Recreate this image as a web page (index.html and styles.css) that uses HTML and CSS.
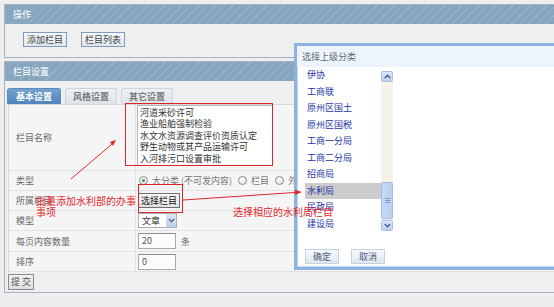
FILE: index.html
```html
<!DOCTYPE html>
<html lang="zh-CN">
<head>
<meta charset="utf-8">
<title>栏目设置</title>
<link rel="stylesheet" href="styles.css">
</head>
<body>
<div class="page">
  <div class="panel p1">
    <div class="phead">操作</div>
    <div class="actions">
      <button class="btn">添加栏目</button>
      <button class="btn">栏目列表</button>
    </div>
  </div>

  <div class="panel p2">
    <div class="phead">栏目设置</div>
    <div class="tabs">
      <span class="tab active">基本设置</span>
      <span class="tab">风格设置</span>
      <span class="tab">其它设置</span>
    </div>
    <div class="form">
      <div class="row r-name">
        <div class="lbl">栏目名称</div>
        <div class="val">
          <div class="ta">河道采砂许可<br>渔业船舶强制检验<br>水文水资源调查评价资质认定<br>野生动物或其产品运输许可<br>入河排污口设置审批</div>
        </div>
      </div>
      <div class="row">
        <div class="lbl">类型</div>
        <div class="val radios">
          <span class="radio checked"></span><span class="rtext">大分类 (不可发内容)</span>
          <span class="radio"></span><span class="rtext">栏目</span>
          <span class="radio"></span><span class="rtext">外部链接</span>
        </div>
      </div>
      <div class="row">
        <div class="lbl">所属栏目</div>
        <div class="val"><button class="btn-pick">选择栏目</button></div>
      </div>
      <div class="row">
        <div class="lbl">模型</div>
        <div class="val">
          <div class="select"><span class="sel-text">文章</span><span class="sel-arrow"><svg width="7" height="5" viewBox="0 0 7 5"><path d="M0.8 1 L3.5 3.8 L6.2 1" fill="none" stroke="#4a6797" stroke-width="1.3"/></svg></span></div>
        </div>
      </div>
      <div class="row r-tall">
        <div class="lbl">每页内容数量</div>
        <div class="val"><div class="input">20</div><span class="unit">条</span></div>
      </div>
      <div class="row">
        <div class="lbl">排序</div>
        <div class="val"><div class="input">0</div></div>
      </div>
    </div>
    <div class="submit-wrap"><button class="btn-submit">提交</button></div>
  </div>

  <div class="dialog">
    <div class="dlg-title">选择上级分类</div>
    <div class="dlg-body">
      <div class="list-wrap">
        <ul class="list">
          <li>伊协</li>
          <li>工商联</li>
          <li>原州区国土</li>
          <li>原州区国税</li>
          <li>工商一分局</li>
          <li>工商二分局</li>
          <li>招商局</li>
          <li class="sel">水利局</li>
          <li>民政局</li>
          <li>建设局</li>
        </ul>
        <div class="scrollbar">
          <span class="sb-btn"><svg width="7" height="5" viewBox="0 0 7 5"><path d="M0.8 4 L3.5 1.2 L6.2 4" fill="none" stroke="#3d5a8c" stroke-width="1.3"/></svg></span>
          <span class="sb-track"></span>
          <span class="sb-thumb"><span class="grip"></span></span>
          <span class="sb-btn"><svg width="7" height="5" viewBox="0 0 7 5"><path d="M0.8 1 L3.5 3.8 L6.2 1" fill="none" stroke="#3d5a8c" stroke-width="1.3"/></svg></span>
        </div>
      </div>
      <div class="dlg-actions">
        <button class="dbtn">确定</button>
        <button class="dbtn">取消</button>
      </div>
    </div>
  </div>

  <svg class="annot" width="554" height="307" viewBox="0 0 554 307">
    <rect x="125.5" y="103.5" width="147" height="62" fill="none" stroke="#d8262a" stroke-width="1"/>
    <rect x="138.5" y="184.5" width="44" height="28" fill="none" stroke="#d8262a" stroke-width="1"/>
    <line x1="71" y1="179" x2="112" y2="144" stroke="#e0282c" stroke-width="1"/>
    <polygon points="116,140 113.1,145.8 109.8,142" fill="#e0282c"/>
    <line x1="183" y1="200" x2="296" y2="192.4" stroke="#e0282c" stroke-width="1"/>
    <polygon points="302,192 295.2,195 294.8,189.8" fill="#e0282c"/>
  </svg>
  <div class="note n1">批量添加水利部的办事事项</div>
  <div class="note n2">选择相应的水利局栏目</div>
</div>
</body>
</html>
```
FILE: styles.css
```css
* { box-sizing: border-box; }
html, body {
  margin: 0;
  padding: 0;
}
body {
  width: 554px;
  height: 307px;
  overflow: hidden;
  background: #eeeeee;
  font-family: "Noto Sans CJK SC", "Noto Sans", sans-serif;
  font-size: 9px;
  color: #555;
}
button { font-family: inherit; cursor: default; }
.page {
  position: relative;
  width: 554px;
  height: 307px;
  overflow: hidden;
  padding: 4px 0 0 4px;
}
.panel {
  width: 550px;
  border: 1px solid #a4b4c4;
  border-right: none;
  background: #efefef;
  overflow: hidden;
}
.p2 { margin-top: 3px; }
.phead {
  height: 19px;
  line-height: 19px;
  padding-left: 8px;
  color: #fff;
  font-size: 9px;
  background: repeating-linear-gradient(135deg, #87a6be 0 5px, #98b4c9 5px 6px);
}
.actions {
  height: 33px;
  padding: 8px 0 0 18px;
  display: flex;
  gap: 14px;
  align-items: flex-start;
}
.btn {
  height: 15px;
  padding: 0 3px;
  font-size: 9px;
  line-height: 13px;
  color: #444;
  border: 1px solid #7f9bb8;
  background: linear-gradient(#f6f8fb, #dfe6ee);
}
.tabs {
  display: flex;
  gap: 4px;
  padding: 7px 0 0 2px;
  height: 23px;
}
.tab {
  width: 52px;
  height: 16px;
  line-height: 15px;
  text-align: center;
  font-weight: bold;
  color: #7a7a7a;
  border: 1px solid #cdd5dd;
  border-bottom: none;
  border-radius: 3px 3px 0 0;
  background: linear-gradient(#eef2f5, #dce3e9);
}
.tab.active {
  width: 54px;
  color: #fff;
  border-color: #5a8cbf;
  background: linear-gradient(#74a2d0, #4f84ba);
}
.form {
  margin-left: 3px;
  border-top: 1px solid #d8d8d8;
  border-left: 1px solid #d8d8d8;
  background: #f5f5f5;
}
.row {
  display: flex;
  height: 20px;
  border-bottom: 1px solid #e2e2e2;
}
.r-name { height: 66px; }
.r-tall { height: 21px; }
.lbl {
  width: 127px;
  flex: none;
  padding-left: 7px;
  border-right: 1px solid #e4e4e4;
  display: flex;
  align-items: center;
  color: #6a6a6a;
}
.val {
  flex: 1;
  display: flex;
  align-items: center;
  padding-left: 2px;
  white-space: nowrap;
}
.r-name .val { align-items: flex-start; padding-left: 1px; }
.ta {
  width: 136px;
  height: 61px;
  padding: 1px 0 0 2px;
  background: #fff;
  border: 1px solid #b8b8b8;
  color: #333;
  line-height: 11.4px;
  white-space: nowrap;
  overflow: hidden;
}
.radios { padding-left: 3px; }
.radio {
  width: 9px;
  height: 9px;
  border-radius: 50%;
  border: 1px solid #8d8d8d;
  background: radial-gradient(circle at 40% 35%, #fff, #dcdcdc);
  position: relative;
  flex: none;
}
.radio.checked::after {
  content: "";
  position: absolute;
  left: 2px;
  top: 2px;
  width: 3px;
  height: 3px;
  border-radius: 50%;
  background: #3a9a3a;
}
.rtext {
  margin: 0 6px 0 4px;
  color: #777;
  white-space: nowrap;
}
.btn-pick {
  height: 15px;
  padding: 0 2px;
  font-size: 9px;
  line-height: 13px;
  color: #111;
  border: 1px solid #6e6e6e;
  background: linear-gradient(#f7f7f7, #e2e2e2);
}
.select {
  width: 39px;
  height: 15px;
  border: 1px solid #a9b0b8;
  background: #fff;
  display: flex;
  align-items: center;
  justify-content: space-between;
  padding-left: 3px;
  color: #333;
}
.sel-arrow {
  width: 10px;
  height: 13px;
  background: linear-gradient(#dbe5f3, #bfd0ea);
  display: flex;
  align-items: center;
  justify-content: center;
}
.input {
  width: 38px;
  height: 16px;
  border: 1px solid #a9a9a9;
  border-top-color: #8e8e8e;
  background: #fbfbfb;
  padding-left: 3px;
  line-height: 14px;
  color: #555;
}
.unit { margin-left: 5px; color: #666; }
.submit-wrap { padding: 2px 0 2px 3px; }
.btn-submit {
  width: 26px;
  height: 16px;
  padding: 0;
  font-size: 9px;
  line-height: 14px;
  letter-spacing: 2px;
  text-indent: 2px;
  color: #555;
  border: 1px solid #8c8c8c;
  background: linear-gradient(#f2f2f2, #dedede);
}

/* dialog */
.dialog {
  position: absolute;
  left: 294px;
  top: 43px;
  width: 260px;
  height: 227px;
  border: 3px solid #8db2e2;
  border-right: none;
  background: #fff;
  box-shadow: inset 1px 1px 0 0 #c6d8ef, inset 0 -1px 0 0 #c6d8ef;
}
.dlg-title {
  height: 21px;
  line-height: 21px;
  padding-left: 5px;
  background: #eef4fb;
  color: #5c6a79;
}
.dlg-body { padding-left: 8px; }
.list-wrap {
  display: flex;
  height: 165px;
}
.list {
  list-style: none;
  margin: 0;
  padding: 0;
  width: 76px;
}
.list li {
  height: 16.5px;
  line-height: 16.5px;
  padding-left: 2px;
  color: #2535a6;
}
.list li.sel { background: #cccccc; }
.scrollbar {
  margin-top: 4px;
  width: 12px;
  height: 160px;
  display: flex;
  flex-direction: column;
  background: #f5f2ea;
  position: relative;
}
.sb-btn {
  height: 11px;
  flex: none;
  border: 1px solid #a9c0e6;
  border-radius: 2px;
  background: linear-gradient(#dde8fa, #bccfee);
  display: flex;
  align-items: center;
  justify-content: center;
}
.sb-track { flex: 1; }
.sb-thumb {
  position: absolute;
  left: 0;
  top: 111px;
  width: 12px;
  height: 37px;
  border: 1px solid #a4bde6;
  border-radius: 2px;
  background: linear-gradient(90deg, #c9d9f6, #b9cdf0);
  display: flex;
  align-items: center;
  justify-content: center;
}
.grip {
  width: 5px;
  height: 5px;
  border-top: 1px solid #7e98c8;
  border-bottom: 1px solid #7e98c8;
  position: relative;
}
.grip::after {
  content: "";
  position: absolute;
  left: 0;
  top: 1px;
  width: 5px;
  height: 1px;
  background: #7e98c8;
}
.dlg-actions {
  display: flex;
  gap: 12px;
  margin-top: 17px;
}
.dbtn {
  width: 34px;
  height: 15px;
  padding: 0;
  font-size: 9px;
  line-height: 13px;
  color: #4b5b78;
  border: 1px solid #c4d1df;
  background: linear-gradient(#f6f9fc, #dfe7f0);
}

/* annotations */
.annot {
  position: absolute;
  left: 0;
  top: 0;
  pointer-events: none;
}
.note {
  position: absolute;
  color: #e3282c;
  font-size: 10px;
  line-height: 11px;
}
.n1 { left: 36px; top: 195px; width: 104px; }
.n2 { left: 233px; top: 206px; white-space: nowrap; }
```
